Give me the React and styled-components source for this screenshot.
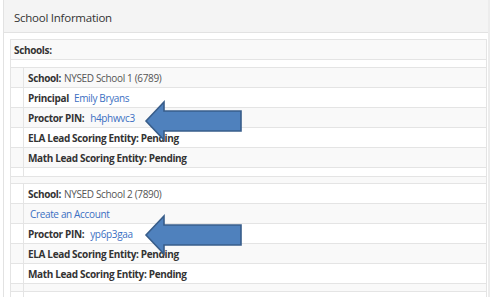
import React from 'react';
import styled, { createGlobalStyle } from 'styled-components';

const GlobalStyle = createGlobalStyle`
  html, body {
    margin: 0;
    padding: 0;
    background: #fff;
  }
  body {
    font-family: 'Open Sans', 'Liberation Sans', sans-serif;
    color: #333;
  }
`;

const Panel = styled.div`
  position: relative;
  margin-left: 3px;
  width: 487px;
  height: 297px;
  box-sizing: border-box;
  border-left: 1px solid #e2e2e2;
  border-right: 2px solid #ececec;
  overflow: hidden;
`;

const PanelHeading = styled.div`
  height: 33px;
  box-sizing: border-box;
  background: #f4f4f4;
  border-bottom: 1px solid #e2e2e2;
  display: flex;
  align-items: center;
  padding: 3px 0 0 10px;
  font-size: 11.5px;
  letter-spacing: -0.25px;
  color: #333;
`;

const PanelBody = styled.div`
  padding: 6px 1px 0 6px;
`;

const Table = styled.div`
  border-left: 1px solid #e4e4e4;
  border-right: 1px solid #e4e4e4;
  display: flex;
  flex-direction: column;
`;

const Row = styled.div`
  display: grid;
  grid-template-columns: ${p => (p.$indent ? '13px 1fr' : '1fr')};
  height: ${p => p.$h || 20}px;
  box-sizing: border-box;
  border-top: 1px solid #e4e4e4;
  background: ${p => (p.$striped ? '#f9f9f9' : '#fff')};
`;

const Indent = styled.div`
  border-right: 1px solid #e4e4e4;
`;

const Cell = styled.div`
  display: flex;
  align-items: center;
  padding: 1px 0 0 ${p => p.$pad || 4}px;
  font-size: 10px;
  letter-spacing: -0.35px;
  white-space: nowrap;
`;

const Label = styled.span`
  font-weight: 700;
  color: #333;
  margin-right: ${p => p.$gap || 3}px;
`;

const Value = styled.span`
  color: #555;
`;

const Link = styled.a`
  color: #3b6fc2;
  text-decoration: none;
`;

const Arrow = styled.svg`
  position: absolute;
  left: 140px;
  top: ${p => p.$top}px;
`;

const BlueArrow = ({ top }) => (
  <Arrow $top={top} width="102" height="44" viewBox="0 0 102 44">
    <path
      d="M2 21 L20 2 L20 11 L97 11 L97 31 L20 31 L20 40 Z"
      fill="#4f81bd"
      stroke="#385d8a"
      strokeWidth="1.6"
      strokeLinejoin="miter"
    />
  </Arrow>
);

const SchoolRows = ({ name, code, second, stripe, pin }) => {
  const s = i => (stripe + i) % 2 === 0;
  return (
    <>
      <Row $indent $striped={s(0)}>
        <Indent />
        <Cell><Label $gap={3}>School:</Label><Value>{name} ({code})</Value></Cell>
      </Row>
      <Row $indent $striped={s(1)}>
        <Indent />
        {second}
      </Row>
      <Row $indent $striped={s(2)}>
        <Indent />
        <Cell><Label $gap={6}>Proctor PIN:</Label><Link href="#">{pin}</Link></Cell>
      </Row>
      <Row $indent $striped={s(3)}>
        <Indent />
        <Cell><Label>ELA Lead Scoring Entity: Pending</Label></Cell>
      </Row>
      <Row $indent $striped={s(4)}>
        <Indent />
        <Cell><Label>Math Lead Scoring Entity: Pending</Label></Cell>
      </Row>
    </>
  );
};

const App = () => (
  <>
    <GlobalStyle />
    <Panel>
      <PanelHeading>School Information</PanelHeading>
      <PanelBody>
        <Table>
          <Row $striped>
            <Cell $pad={3}><Label>Schools:</Label></Cell>
          </Row>
          <Row $h={8} />
          <SchoolRows
            name="NYSED School 1"
            code="6789"
            pin="h4phwvc3"
            stripe={0}
            second={<Cell><Label $gap={5}>Principal</Label><Link href="#">Emily Bryans</Link></Cell>}
          />
          <Row $indent $h={9}><Indent /></Row>
          <Row $striped $h={7} />
          <SchoolRows
            name="NYSED School 2"
            code="7890"
            pin="yp6p3gaa"
            stripe={1}
            second={<Cell $pad={6}><Link href="#">Create an Account</Link></Cell>}
          />
          <Row $indent $striped $h={8}><Indent /></Row>
          <Row $indent $h={20}><Indent /></Row>
        </Table>
      </PanelBody>
      <BlueArrow top={100} />
      <BlueArrow top={214} />
    </Panel>
  </>
);

export default App;
